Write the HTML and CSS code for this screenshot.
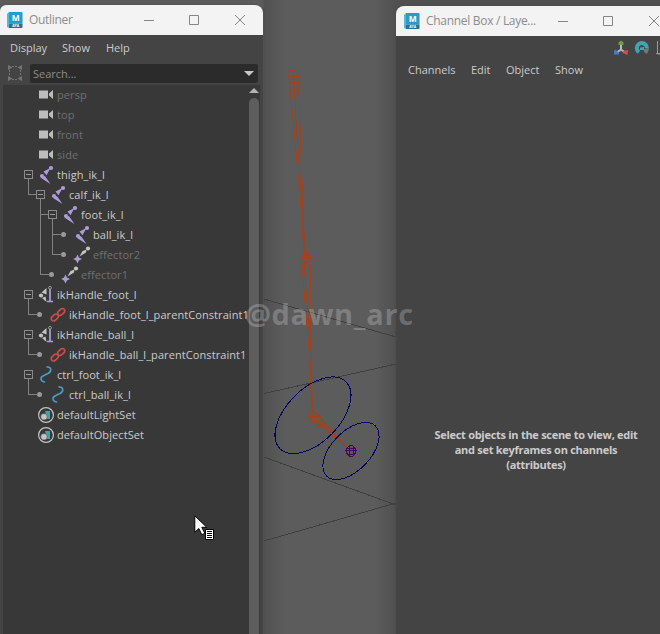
FILE: index.html
```html
<!DOCTYPE html>
<html lang="en">
<head>
<meta charset="utf-8">
<title>Outliner</title>
<link rel="stylesheet" href="styles.css">
</head>
<body>
<svg class="defs" width="0" height="0">
  <symbol id="camera" viewBox="0 0 16 16"><path fill="#bdbdbd" d="M1 3.500h9v8H1zM11 6.500 15 3v9l-4-3.500z"/></symbol>
  <symbol id="joint" viewBox="0 0 16 16"><g fill="#ab9ddb"><circle cx="13" cy="1" r="2.100"/><circle cx="4" cy="9" r="2.100"/><path d="M12.500 1 5.500 4.500 8.500 8.300zM3 11 6.900 9 12.500 17z"/></g></symbol>
  <symbol id="effector" viewBox="0 0 16 16"><path fill="#ab9ddb" d="m3.500 7.500 1.400 2.900L8 12l-3.100 1.400-1.400 3-1.400-3L-.8 12l2.900-1.600z"/><g fill="#c4c4c4"><circle cx="14" cy="1.500" r="2.100"/><path d="M5.500 9.500 8.500 4 12.500 2.500 12 5.500z"/></g></symbol>
  <symbol id="handle" viewBox="0 0 16 16"><g fill="#c4c4c4"><circle cx="3" cy="8.500" r="2.100"/><path d="M3.500 5.500 8.500 1v6.500zM4 11l3.500-1.500 1 5.500z"/></g><path fill="none" stroke="#ab9ddb" stroke-width="1.700" d="M12 2v13M9 14.500h6"/><circle cx="12" cy="0.800" r="1.400" fill="none" stroke="#999"/></symbol>
  <symbol id="link" viewBox="0 0 16 16"><g fill="none" stroke="#d04b4b" stroke-width="1.700"><rect x="-4" y="-2.300" width="8" height="4.600" rx="2.300" transform="translate(4.800 10.500) rotate(-43)"/><rect x="-4" y="-2.300" width="8" height="4.600" rx="2.300" transform="translate(11.200 5) rotate(-43)"/></g></symbol>
  <symbol id="curve" viewBox="0 0 16 16"><path fill="none" stroke="#4b9dc6" stroke-width="1.600" stroke-linecap="round" d="M9 0C13-.5 14.500 4 10 6.500 5 9 2.500 9.500 3 12c.3 2 1.500 2.700 3.500 3"/></symbol>
  <symbol id="set" viewBox="0 0 16 16"><circle cx="8" cy="8" r="7.400" fill="none" stroke="#c4c4c4" stroke-width="1.200"/><path fill="#3fa3ac" d="M7 4h5v8H9z"/><circle cx="6" cy="9.800" r="3.300" fill="#c4c4c4" stroke="#383838" stroke-width=".5"/></symbol>
</svg>

<main class="desktop">
  <svg class="viewport" viewBox="0 0 660 634">
    <g class="grid"><path d="M264 299 396 337M264 393.500 396 364M264 457 396 505M264 541 396 503"/></g>
    <g class="bones">
      <circle cx="293.500" cy="75" r="5"/><path d="M288 76h12M293 70v14M289 82h10"/>
      <path d="M289.500 81 291 98 300.500 200 304 253M294 82 296 120 302 205 304 253M298.500 82 300 125 303 210 305 253"/>
      <circle cx="306" cy="258.500" r="4.500"/><path d="M299 258.500h13M306 252v14M302 261h8M302 256h8"/>
      <path d="M302 263 304 290 309 350 312 413M304 263 309 330 312 413M310 263 311 350 312.500 413"/>
      <circle cx="313" cy="416" r="4.500"/><path d="M307 416h12M313 410v12M309 412l8 8M309 420l8-8"/>
      <path d="M310 421 335 437 349 449M313 421 335 438M316 420 338 440M318 416 338 438 350 450M317 413 340 440 351 450M315 418 349 449"/>
      <path d="M346 450h10M351 446v8"/>
    </g>
    <g class="rings">
      <ellipse cx="313" cy="415.300" rx="47" ry="26.500" transform="rotate(-45.500 313 415.300)"/>
      <ellipse cx="351" cy="451" rx="35" ry="19.500" transform="rotate(-46 351 451)"/>
    </g>
    <g class="marker"><ellipse cx="351" cy="451" rx="4.500" ry="5.500"/><path d="M345 450.500h12M349 446v10M353 446v10M347 448h8M347 454h8"/></g>
  </svg>

  <section class="window outliner">
    <header class="titlebar">
      <svg class="logo" viewBox="0 0 16 16"><path fill="#58b7d7" d="M0 2 2 0v16l-2-1z"/><path fill="#269dc6" d="M2 0h12.500q1 0 1 1v10.500H2z"/><path fill="#28718d" d="M2 11.500h13.500V15q0 1-1 1H2z"/><text x="8.700" y="9" class="logo-m">M</text><text x="8.700" y="15.200" class="logo-s">AYA</text></svg>
      <h1>Outliner</h1>
      <svg class="controls" viewBox="0 0 110 12"><path d="M5 6.500h10M50.500 1.500h9v9h-9zM96 1l10 10M106 1 96 11"/></svg>
    </header>
    <nav class="menu"><span class="display">Display</span><span class="show">Show</span><span>Help</span></nav>
    <div class="search">
      <svg class="focus" viewBox="0 0 16 16"><path fill="none" stroke="#747474" d="M5 1.500h6M5 14.500h6M2.500 5v6M13.500 5v6" stroke-dasharray="2 1"/><path fill="#747474" d="M1 0 5.500 2.500 1 5zM15 0v5l-4.500-2.500zM1 11l4.500 2.500L1 16zM15 11v5l-4.500-2.500z"/></svg>
      <div class="field"><span>Search...</span><i class="caret"></i></div>
    </div>
    <div class="panel">
      <ul class="tree">
        <li class="dim"><i class="cell"></i><svg><use href="#camera"/></svg><span>persp</span></li>
        <li class="dim"><i class="cell"></i><svg><use href="#camera"/></svg><span>top</span></li>
        <li class="dim"><i class="cell"></i><svg><use href="#camera"/></svg><span>front</span></li>
        <li class="dim"><i class="cell"></i><svg><use href="#camera"/></svg><span>side</span></li>
        <li><i class="cell box"></i><svg><use href="#joint"/></svg><span>thigh_ik_l</span></li>
        <li><i class="cell elbow"></i><i class="cell box"></i><svg><use href="#joint"/></svg><span>calf_ik_l</span></li>
        <li><i class="cell"></i><i class="cell elbow tee"></i><i class="cell box"></i><svg><use href="#joint"/></svg><span>foot_ik_l</span></li>
        <li><i class="cell"></i><i class="cell pipe"></i><i class="cell elbow tee"></i><i class="cell dot"></i><svg><use href="#joint"/></svg><span>ball_ik_l</span></li>
        <li class="dim"><i class="cell"></i><i class="cell pipe"></i><i class="cell elbow"></i><i class="cell dot"></i><svg><use href="#effector"/></svg><span>effector2</span></li>
        <li class="dim"><i class="cell"></i><i class="cell elbow"></i><i class="cell dot"></i><svg><use href="#effector"/></svg><span>effector1</span></li>
        <li><i class="cell box"></i><svg><use href="#handle"/></svg><span>ikHandle_foot_l</span></li>
        <li><i class="cell elbow"></i><i class="cell dot"></i><svg><use href="#link"/></svg><span>ikHandle_foot_l_parentConstraint1</span></li>
        <li><i class="cell box"></i><svg><use href="#handle"/></svg><span>ikHandle_ball_l</span></li>
        <li><i class="cell elbow"></i><i class="cell dot"></i><svg><use href="#link"/></svg><span>ikHandle_ball_l_parentConstraint1</span></li>
        <li><i class="cell box"></i><svg><use href="#curve"/></svg><span>ctrl_foot_ik_l</span></li>
        <li><i class="cell elbow"></i><i class="cell dot"></i><svg><use href="#curve"/></svg><span>ctrl_ball_ik_l</span></li>
        <li><i class="cell"></i><svg><use href="#set"/></svg><span>defaultLightSet</span></li>
        <li><i class="cell"></i><svg><use href="#set"/></svg><span>defaultObjectSet</span></li>
      </ul>
      <div class="scrollbar"><i class="up"></i><i class="thumb"></i></div>
    </div>
  </section>

  <section class="window channels">
    <header class="titlebar">
      <svg class="logo" viewBox="0 0 16 16"><path fill="#58b7d7" d="M0 2 2 0v16l-2-1z"/><path fill="#269dc6" d="M2 0h12.500q1 0 1 1v10.500H2z"/><path fill="#28718d" d="M2 11.500h13.500V15q0 1-1 1H2z"/><text x="8.700" y="9" class="logo-m">M</text><text x="8.700" y="15.200" class="logo-s">AYA</text></svg>
      <h1>Channel Box / Laye...</h1>
      <svg class="controls" viewBox="0 0 110 12"><path d="M5 6.500h10M50.500 1.500h9v9h-9zM96 1l10 10M106 1 96 11"/></svg>
    </header>
    <div class="tools">
      <svg viewBox="0 0 16 16"><path fill="none" stroke="#b9b9b9" stroke-width="2" d="M8 5v4.500L4.500 12M8 9.500l3.500 2.500"/><path fill="#6aa33b" d="m8 .5 2.500 2V5h-5V2.500z"/><path fill="#477bc9" d="m1 11 1.500-1.500L6 13v1.500H1z"/><path fill="#d84a4f" d="m15 10-4.500 1-1 2 5 2z"/></svg>
      <svg viewBox="0 0 16 16"><path fill="none" stroke="#3fa6b1" stroke-width="4" d="M5 12.200A5 5 0 1 1 12.800 8.500"/><path fill="#3fa6b1" d="m6 7.500 4-.5v3H6z"/><path fill="#777" d="M10 9h5l-2 5-3-2z"/></svg>
      <svg viewBox="0 0 16 16"><path fill="none" stroke="#999" d="M2.500 1v13H16M1 13.500h5"/></svg>
    </div>
    <nav class="menu"><span class="m1">Channels</span><span class="m2">Edit</span><span class="m3">Object</span><span>Show</span></nav>
    <p class="hint">Select objects in the scene to view, edit<br>and set keyframes on channels<br>(attributes)</p>
  </section>

  <div class="watermark">@dawn_arc</div>
  <svg class="cursor" viewBox="0 0 21 26"><path fill="#fff" stroke="#000" d="M.8.800v16.500l4-3.800 3 6.200 3-1.400-3-6h5z"/><path fill="#fff" stroke="#000" d="M11.500 14.500h8v10h-8z"/><path stroke="#000" d="M13 16.500h5M13 18.500h5M13 20.500h5M13 22.500h5"/></svg>
</main>
</body>
</html>
```
FILE: styles.css
```css
*, *::before, *::after { box-sizing: border-box; }
body { margin: 0; font: 11px/20px "Open Sans", "Noto Sans", sans-serif; color: #cbcbcb; }
.defs { position: absolute; }
.desktop { position: relative; width: 660px; height: 634px; overflow: hidden; background: #5b5b5b; }
.viewport { position: absolute; inset: 0; width: 660px; height: 634px; background: linear-gradient(90deg, transparent 263px, #515151 264px, #5c5c5c 285px, #5c5c5c 375px, #505050 396px); }
.viewport g { fill: none; shape-rendering: crispEdges; }
.grid { stroke: #404040; }
.bones { stroke: #984525; }
.rings { stroke: #050560; }
.marker { stroke: #410b51; }

.window { position: absolute; display: flex; flex-direction: column; overflow: hidden; background: #444; }
.outliner { left: 0; top: 5px; width: 263px; height: 629px; border-radius: 6px 8px 0 0; box-shadow: 0 0 2px #444; }
.channels { left: 396px; top: 6px; width: 272px; height: 628px; border-radius: 8px 0 0; box-shadow: 0 0 2px #444; }
.titlebar { display: flex; flex: none; align-items: center; height: 30px; padding-left: 7px; background: #f3f3f3; color: #8c8c8c; }
.logo { width: 16px; height: 16px; margin-right: 6px; }
.logo-m { font: bold 8.5px "Open Sans", sans-serif; fill: #fff; text-anchor: middle; }
.logo-s { font: bold 3.5px "Open Sans", sans-serif; fill: #fff; text-anchor: middle; }
h1 { flex: 1; margin: 0; font-size: 12px; font-weight: 400; letter-spacing: -.3px; white-space: nowrap; }
.controls { flex: none; width: 110px; height: 12px; margin-right: 14px; fill: none; stroke: #858585; }
.channels .titlebar { padding-left: 8px; }
.channels .controls { margin-right: 5px; }

.menu { display: flex; flex: none; height: 26px; padding: 3px 0 0 10px; }
.display { width: 52px; }
.show { width: 44px; }
.search { display: flex; flex: none; height: 24px; padding-top: 3px; }
.focus { width: 16px; height: 16px; margin: 1px 7px 0; }
.field { display: flex; align-items: center; justify-content: space-between; width: 228px; height: 19px; padding: 0 4px 0 3px; border-radius: 2px; background: #2b2b2b; color: #8c8c8c; }
.caret { border: 5px solid transparent; border-top: 5px solid #c8c8c8; border-bottom: 0; }
.panel { display: flex; flex: 1; margin-left: 3px; background: #383838; }
.tree { width: 245px; margin: 0; padding: 0 0 0 20px; overflow: hidden; list-style: none; letter-spacing: .08px; }
.tree li { display: flex; align-items: center; height: 20px; white-space: nowrap; }
.tree svg { flex: none; width: 16px; height: 16px; margin: 0 3px; overflow: visible; }
symbol { overflow: visible; }
.tree .dim { color: #707070; }
.cell { position: relative; flex: none; width: 12px; height: 20px; }
.cell::before, .cell::after { position: absolute; content: ""; }
.box::before { left: 1px; top: 5px; width: 9px; height: 9px; border: 1px solid #8a8a8a; background: linear-gradient(#999, #999) center / 5px 1px no-repeat; }
.box::after { left: 5px; top: 14px; width: 1px; height: 6px; background: #828282; }
.elbow::before { left: 5px; top: 0; width: 8px; height: 10px; border: solid #828282; border-width: 0 0 1px 1px; }
.pipe::before, .tee::after { left: 5px; top: 0; width: 1px; height: 20px; background: #828282; }
.dot::before { left: 2px; top: 7px; width: 5px; height: 5px; border-radius: 50%; background: #9a9a9a; }
.dot::after { left: 0; top: 9px; width: 3px; height: 1px; background: #828282; }
.scrollbar { display: flex; flex-direction: column; align-items: center; width: 15px; padding: 3px 4px 0 1px; background: linear-gradient(90deg, transparent 12px, #444 12px); }
.up { border: 5px solid transparent; border-bottom: 5px solid #b4b4b4; border-top: 0; }
.thumb { flex: 1; width: 10px; margin-top: 5px; border-radius: 5px 5px 0 0; background: #5d5d5d; }

.tools { display: flex; flex: none; gap: 5px; height: 20px; padding: 4px 0 0 217px; }
.tools svg { flex: none; width: 16px; height: 16px; }
.channels .menu { padding: 4px 0 0 12px; }
.m1 { width: 63px; }
.m2 { width: 35px; }
.m3 { width: 49px; }
.hint { margin: 345px 0 0; width: 280px; font-weight: 700; line-height: 15px; letter-spacing: -.28px; text-align: center; }
.watermark { position: absolute; left: 245px; top: 296px; font: bold 29px/36px "Open Sans", sans-serif; letter-spacing: .6px; color: #ffffff38; }
.cursor { position: absolute; left: 194px; top: 515px; width: 21px; height: 26px; }
```
